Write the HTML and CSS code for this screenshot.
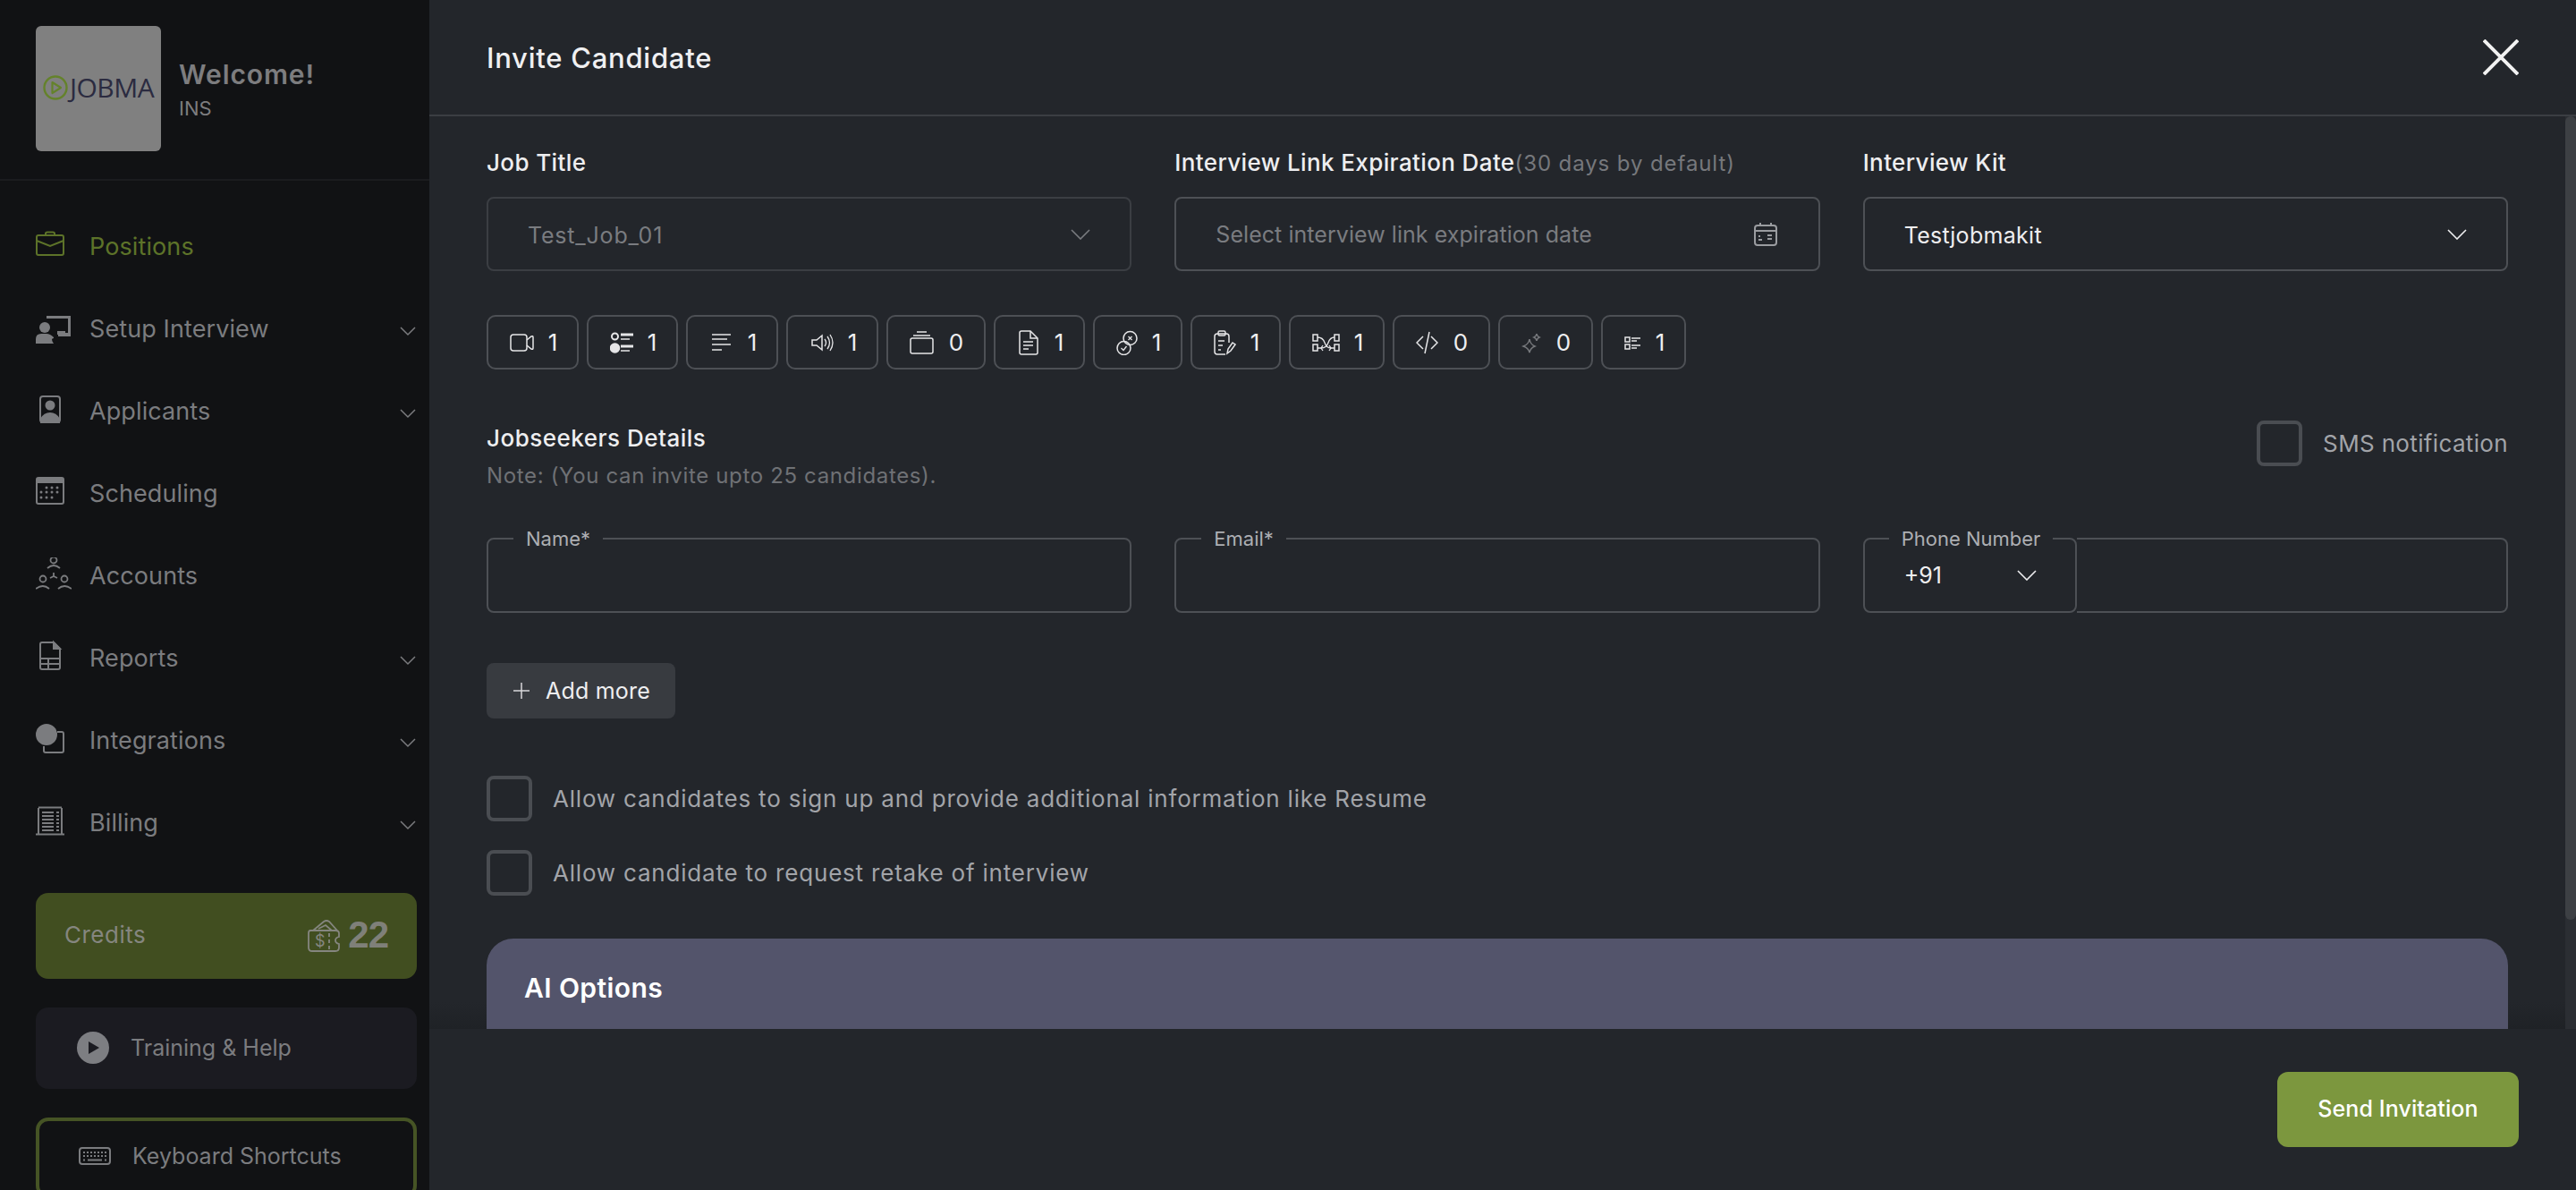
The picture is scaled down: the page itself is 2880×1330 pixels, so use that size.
FILE: index.html
```html
<!DOCTYPE html>
<html lang="en">
<head>
    <meta charset="UTF-8">
    <meta name="viewport" content="width=device-width, initial-scale=1.0">
    <title>Invite Candidate</title>
    <link rel="stylesheet" href="styles.css">
</head>
<body>
    <aside class="sidebar">
        <div class="brand">
            <div class="logo">
                <svg class="logo-mark" width="28" height="28" viewBox="0 0 28 28"><circle cx="14" cy="14" r="12.5" fill="none" stroke="#64822b" stroke-width="2.4"/><path d="M10.5 8 L20 14 L10.5 20 Z" fill="none" stroke="#64822b" stroke-width="2.2" stroke-linejoin="round"/></svg>
                <span class="logo-text">JOBMA</span>
            </div>
            <div class="brand-text">
                <div class="welcome">Welcome!</div>
                <div class="org">INS</div>
            </div>
        </div>

        <nav class="nav">
            <a class="nav-item active">
                <svg class="nav-icon" width="40" height="40" viewBox="0 0 40 40" fill="none" stroke="currentColor" stroke-width="2"><rect x="1" y="8" width="30" height="22" rx="2"/><path d="M1 14 L16 20 L31 14"/><path d="M11 8 V6 Q11 4.500 13 4.500 H19 Q21 4.500 21 6 V8"/></svg>
                <span>Positions</span>
            </a>
            <a class="nav-item">
                <svg class="nav-icon" width="40" height="40" viewBox="0 0 40 40" fill="currentColor"><path d="M12 9 V6 H39 V29 H25 V25 H36 V9 Z"/><rect x="24" y="23" width="9" height="4"/><circle cx="10" cy="19" r="6"/><path d="M0 37 V32 Q0 26 6 26 H12 Q16 26 20 30 V31 H20 Q16 31 20 37 Z"/></svg>
                <span>Setup Interview</span>
                <svg class="chevron" width="18" height="12" viewBox="0 0 18 12"><path d="M1 2 L9 10 L17 2" fill="none" stroke="currentColor" stroke-width="1.500"/></svg>
            </a>
            <a class="nav-item">
                <svg class="nav-icon" width="40" height="40" viewBox="0 0 40 40"><rect x="5" y="4" width="22" height="29" rx="3" fill="none" stroke="currentColor" stroke-width="2"/><circle cx="16" cy="14" r="5.500" fill="currentColor"/><path d="M5 34 V29 Q9 22 16 22 Q23 22 27 29 V34 Z" fill="currentColor"/></svg>
                <span>Applicants</span>
                <svg class="chevron" width="18" height="12" viewBox="0 0 18 12"><path d="M1 2 L9 10 L17 2" fill="none" stroke="currentColor" stroke-width="1.500"/></svg>
            </a>
            <a class="nav-item">
                <svg class="nav-icon" width="40" height="40" viewBox="0 0 40 40" fill="currentColor"><path d="M3 2 H29 Q32 2 32 5 V30 Q32 33 29 33 H3 Q0 33 0 30 V5 Q0 2 3 2 Z M2 9 V30 Q2 31 3 31 H29 Q30 31 30 30 V9 Z"/><circle cx="12" cy="14" r="1.500"/><circle cx="18" cy="14" r="1.500"/><circle cx="24" cy="14" r="1.500"/><circle cx="6" cy="19" r="1.500"/><circle cx="12" cy="19" r="1.500"/><circle cx="18" cy="19" r="1.500"/><circle cx="24" cy="19" r="1.500"/><circle cx="6" cy="25" r="1.500"/><circle cx="12" cy="25" r="1.500"/><circle cx="18" cy="25" r="1.500"/></svg>
                <span>Scheduling</span>
            </a>
            <a class="nav-item">
                <svg class="nav-icon" width="40" height="40" viewBox="0 0 40 40" fill="none" stroke="currentColor" stroke-width="1.800"><circle cx="20" cy="3" r="3.500"/><path d="M13 12 Q20 6 27 12"/><circle cx="8" cy="24" r="3.500"/><path d="M0 35 Q8 29 15 35"/><circle cx="32" cy="24" r="3.500"/><path d="M25 35 Q32 29 40 35"/><path d="M20 17 V21 M20 21 L16 23 M20 21 L24 23"/></svg>
                <span>Accounts</span>
            </a>
            <a class="nav-item">
                <svg class="nav-icon" width="40" height="40" viewBox="0 0 40 40" fill="none" stroke="currentColor" stroke-width="2"><path d="M7 3 H20 L27 10 V31 Q27 33 25 33 H7 Q5 33 5 31 V5 Q5 3 7 3 Z"/><path d="M20 3 L27 10 H20 Z" fill="currentColor"/><path d="M5 21 H27 M5 27 H27 M14 21 V33"/></svg>
                <span>Reports</span>
                <svg class="chevron" width="18" height="12" viewBox="0 0 18 12"><path d="M1 2 L9 10 L17 2" fill="none" stroke="currentColor" stroke-width="1.500"/></svg>
            </a>
            <a class="nav-item">
                <svg class="nav-icon" width="40" height="40" viewBox="0 0 40 40"><path d="M24 11 H29 Q31 11 31 13 V32 Q31 34 29 34 H11 Q9 34 9 32 V27" fill="none" stroke="currentColor" stroke-width="2"/><circle cx="12" cy="14" r="12" fill="currentColor"/></svg>
                <span>Integrations</span>
                <svg class="chevron" width="18" height="12" viewBox="0 0 18 12"><path d="M1 2 L9 10 L17 2" fill="none" stroke="currentColor" stroke-width="1.500"/></svg>
            </a>
            <a class="nav-item">
                <svg class="nav-icon" width="40" height="40" viewBox="0 0 40 40" fill="none" stroke="currentColor" stroke-width="2"><path d="M3 4 V33 M29 4 V33 M0 33.500 H32 M3 3.500 H29" /><path d="M7 9 H20 M7 13 H20 M7 17 H20 M7 21 H20 M7 25 H20 M7 29 H20" stroke-width="1.800"/><path d="M23 9 H26 M23 13 H26 M23 17 H26 M23 21 H26 M23 25 H26 M23 29 H26" stroke-width="1.800"/></svg>
                <span>Billing</span>
                <svg class="chevron" width="18" height="12" viewBox="0 0 18 12"><path d="M1 2 L9 10 L17 2" fill="none" stroke="currentColor" stroke-width="1.500"/></svg>
            </a>
        </nav>

        <div class="credits">
            <span class="credits-label">Credits</span>
            <svg class="credits-icon" width="36" height="36" viewBox="0 0 36 36" fill="none" stroke="currentColor" stroke-width="1.800"><path d="M3 12 H31 Q35 12 35 15 V19 Q31 20 31 23 Q31 26 35 27 V31 Q35 35 31 35 H5 Q1 35 1 31 V15 Q1 12 3 12 Z"/><path d="M6 12 L18 2 Q21 0 24 2 L33 12"/><path d="M12 10 L20 6 L27 12"/><path d="M24 15 V33" stroke-dasharray="4 3"/><text x="8" y="30" class="credits-dollar">$</text></svg>
            <span class="credits-count">22</span>
        </div>

        <div class="training">
            <svg width="36" height="36" viewBox="0 0 36 36"><circle cx="18" cy="18" r="18" fill="#7d7e82"/><path d="M13 11 L25 18 L13 25 Z" fill="#1b1b21"/></svg>
            <span>Training &amp; Help</span>
        </div>

        <div class="shortcuts">
            <svg width="36" height="20" viewBox="0 0 36 20" fill="none" stroke="currentColor"><rect x="1" y="1" width="34" height="18" rx="3" stroke-width="2"/><path d="M5 6 H31 M5 10 H31" stroke-width="2" stroke-dasharray="2 2"/><path d="M10 14.500 H26" stroke-width="2"/><path d="M5 14.500 H7 M29 14.500 H31" stroke-width="2"/></svg>
            <span>Keyboard Shortcuts</span>
        </div>
    </aside>

    <main class="main">
        <header class="modal-header">
            <h1>Invite Candidate</h1>
            <svg class="close" width="40" height="40" viewBox="0 0 40 40"><path d="M1 1 L39 39 M39 1 L1 39" stroke="#f2f2f2" stroke-width="4"/></svg>
        </header>

        <div class="modal-body">
            <div class="form">
                <div class="grid">
                    <div>
                        <label class="field-label">Job Title</label>
                        <div class="select disabled">
                            <span>Test_Job_01</span>
                            <svg width="22" height="12" viewBox="0 0 22 12"><path d="M1 1 L11 11 L21 1" fill="none" stroke="currentColor" stroke-width="1.600"/></svg>
                        </div>
                    </div>
                    <div>
                        <label class="field-label">Interview Link Expiration Date<span class="hint">(30 days by default)</span></label>
                        <div class="select placeholder">
                            <span>Select interview link expiration date</span>
                            <svg class="calendar" width="26" height="26" viewBox="0 0 26 26" fill="none" stroke="currentColor" stroke-width="2"><rect x="1" y="3" width="24" height="22" rx="3"/><path d="M1 9 H25 M7 0 V4 M19 0 V4"/><path d="M5 19 H9 M5 15 H7 M15 14 H20 M15 18 H20" stroke-width="1.800"/></svg>
                        </div>
                    </div>
                    <div>
                        <label class="field-label">Interview Kit</label>
                        <div class="select">
                            <span>Testjobmakit</span>
                            <svg width="22" height="12" viewBox="0 0 22 12"><path d="M1 1 L11 11 L21 1" fill="none" stroke="currentColor" stroke-width="1.600"/></svg>
                        </div>
                    </div>
                </div>

                <div class="chips">
                    <div class="chip">
                        <svg width="27" height="28" viewBox="0 0 27 28"><rect x="1" y="5" width="18" height="18" rx="3"/><path d="M19 11 L24 7 Q26 6 26 8 V20 Q26 22 24 21 L19 17"/></svg>
                        <span class="count">1</span>
                    </div>
                    <div class="chip">
                        <svg width="26" height="28" viewBox="0 0 26 28"><circle cx="5.500" cy="7" r="3.500" stroke-width="2"/><circle cx="5.500" cy="20" r="5" fill="#e6e6e8"/><path d="M12 5 H26 M12 18 H26" stroke-width="3"/><path d="M12 10 H22 M12 23 H22"/></svg>
                        <span class="count">1</span>
                    </div>
                    <div class="chip">
                        <svg width="27" height="28" viewBox="0 0 27 28"><path d="M3 5 H24 M3 10 H20 M3 16 H24 M3 22 H14"/></svg>
                        <span class="count">1</span>
                    </div>
                    <div class="chip">
                        <svg width="27" height="28" viewBox="0 0 27 28"><path d="M3 11 H8 L14 6 V22 L8 17 H3 Z"/><path d="M17 10 Q20 14 17 18 M20 7 Q25 14 20 21 M23 5 Q29 14 23 23" stroke-width="1.300"/></svg>
                        <span class="count">1</span>
                    </div>
                    <div class="chip">
                        <svg width="27" height="28" viewBox="0 0 27 28"><rect x="1" y="9" width="25" height="17" rx="2"/><path d="M4 6 H23 M8 2 H19"/></svg>
                        <span class="count wide">0</span>
                    </div>
                    <div class="chip">
                        <svg width="26" height="28" viewBox="0 0 26 28"><path d="M5 1 H15 L23 9 V25 Q23 27 21 27 H5 Q3 27 3 25 V3 Q3 1 5 1 Z"/><path d="M15 1 V9 H23"/><path d="M7 13 H18 M7 17 H18 M7 21 H13"/></svg>
                        <span class="count">1</span>
                    </div>
                    <div class="chip">
                        <svg width="24" height="28" viewBox="0 0 24 28"><circle cx="15.500" cy="9" r="7.500"/><circle cx="8.500" cy="20" r="7.500"/><path d="M13.500 7 L17.500 11 M17.500 7 L13.500 11 M5.500 20 L8 22.500 L11.500 18" stroke-width="1.300"/></svg>
                        <span class="count">1</span>
                    </div>
                    <div class="chip">
                        <svg width="25" height="28" viewBox="0 0 25 28"><path d="M13 27 H4 Q1 27 1 24 V7 Q1 4 4 4 H14 Q17 4 17 7 V14"/><rect x="5" y="1" width="8" height="5" rx="1.500"/><path d="M5 12 H12 M5 17 H10 M5 22 H8"/><path d="M15 26 L16 21 L21 14 L24 16 L19 23 Z"/></svg>
                        <span class="count">1</span>
                    </div>
                    <div class="chip">
                        <svg width="31" height="28" viewBox="0 0 31 28"><rect x="1" y="5" width="5" height="7"/><rect x="1" y="16" width="5" height="7"/><rect x="25" y="5" width="5" height="7"/><rect x="25" y="16" width="5" height="7"/><path d="M6 8 Q12 8 14 14 Q16 20 21 20 H25 M25 8 Q20 8 18 14 Q16 20 10 20 H6" stroke-width="1.300"/><path d="M12 17 L10 20 L12 23 M19 17 L21 20 L19 23" stroke-width="1.300"/></svg>
                        <span class="count">1</span>
                    </div>
                    <div class="chip">
                        <svg width="25" height="28" viewBox="0 0 25 28"><path d="M8 7 L1 14 L8 21 M17 7 L24 14 L17 21 M15 2 L10 26"/></svg>
                        <span class="count wide">0</span>
                    </div>
                    <div class="chip">
                        <svg class="dim" width="22" height="28" viewBox="1 0 22 28"><path d="M10 10 Q11 16 16 18 Q11 20 10 25 Q9 20 3 18 Q9 16 10 10 Z M18 4 Q18.500 7 21 8 Q18.500 9 18 12 Q17.500 9 15 8 Q17.500 7 18 4 Z"/></svg>
                        <span class="count wide">0</span>
                    </div>
                    <div class="chip">
                        <svg width="19" height="28" viewBox="0 0 19 28"><rect x="1" y="8" width="5" height="5"/><rect x="1" y="16" width="5" height="5"/><path d="M8 9 H18 M8 12 H14 M8 17 H18 M8 20 H14" stroke-width="1.300"/></svg>
                        <span class="count">1</span>
                    </div>
                </div>

                <div class="details-head">
                    <div class="details-text">
                        <h2>Jobseekers Details</h2>
                        <p>Note: (You can invite upto 25 candidates).</p>
                    </div>
                    <label class="check sms">
                        <span class="box"></span>
                        <span>SMS notification</span>
                    </label>
                </div>

                <div class="grid candidate-row">
                    <div class="outlined">
                        <span class="legend">Name*</span>
                    </div>
                    <div class="outlined">
                        <span class="legend">Email*</span>
                    </div>
                    <div class="phone">
                        <div class="outlined phone-code">
                            <span class="legend">Phone Number</span>
                            <span>+91</span>
                            <svg width="22" height="12" viewBox="0 0 22 12"><path d="M1 1 L11 11 L21 1" fill="none" stroke="currentColor" stroke-width="1.600"/></svg>
                        </div>
                        <div class="outlined phone-input"></div>
                    </div>
                </div>

                <button class="add-more">
                    <svg width="18" height="18" viewBox="0 0 18 18"><path d="M9 0 V18 M0 9 H18" stroke="#d8d8da" stroke-width="1.500"/></svg>
                    Add more
                </button>

                <div class="options">
                    <label class="check">
                        <span class="box"></span>
                        <span>Allow candidates to sign up and provide additional information like Resume</span>
                    </label>
                    <label class="check">
                        <span class="box"></span>
                        <span>Allow candidate to request retake of interview</span>
                    </label>
                </div>

                <section class="ai-card">
                    <h3>AI Options</h3>
                </section>
            </div>
            <div class="scrollbar"><div class="thumb"></div></div>
        </div>

        <footer class="modal-footer">
            <button class="send">Send Invitation</button>
        </footer>
    </main>
</body>
</html>
```

FILE: styles.css
```css
* {
    box-sizing: border-box;
}
html, body {
    height: 100%;
}
body {
    margin: 0;
    display: flex;
    overflow: hidden;
    font-family: Inter, "Noto Sans", sans-serif;
    background: #23262b;
    color: #eeeef0;
}

/* sidebar */
.sidebar {
    width: 480px;
    flex-shrink: 0;
    height: 100vh;
    overflow: hidden;
    background: #111214;
    color: #7b7c7f;
}
.brand {
    display: flex;
    align-items: center;
    gap: 20px;
    height: 202px;
    padding: 0 40px 2px;
    border-bottom: 2px solid #1b1c1f;
}
.logo {
    width: 140px;
    height: 140px;
    background: #808080;
    border-radius: 6px;
    display: flex;
    align-items: center;
    justify-content: center;
    gap: 2px;
    padding-bottom: 3px;
}
.logo-text {
    font-family: "Open Sans", sans-serif;
    font-size: 30px;
    color: #2b2b40;
    letter-spacing: -0.5px;
}
.brand-text {
    padding-top: 3px;
}
.welcome {
    font-size: 30px;
    font-weight: 600;
    color: #7d7d7f;
    line-height: 40px;
    letter-spacing: 0.9px;
}
.org {
    font-size: 22px;
    color: #7d7d7f;
    line-height: 36px;
}
.nav {
    padding-top: 27px;
}
.nav-item {
    height: 92px;
    padding: 0 15px 0 40px;
    display: flex;
    align-items: center;
    font-size: 27px;
    letter-spacing: 0.1px;
}
.nav-item.active {
    color: #5d7329;
}
.nav-icon {
    margin-right: 20px;
    flex-shrink: 0;
}
.chevron {
    margin-left: auto;
    margin-top: 6px;
}
.credits {
    margin: 33px 14px 0 40px;
    height: 96px;
    padding: 0 32px;
    background: #414e20;
    border-radius: 14px;
    display: flex;
    align-items: center;
    font-size: 26px;
    color: #85867f;
}
.credits-label {
    letter-spacing: 0.5px;
    padding-bottom: 3px;
}
.credits-icon {
    margin-left: auto;
    margin-right: 9px;
}
.credits-dollar {
    font-size: 18px;
    fill: currentColor;
    stroke: none;
}
.credits-count {
    font-family: "Liberation Sans", sans-serif;
    font-weight: 700;
    font-size: 42px;
    letter-spacing: -1px;
    color: #7f8079;
    padding-bottom: 2px;
}
.training {
    margin: 32px 14px 0 40px;
    height: 91px;
    padding: 0 46px 2px;
    background: #1b1b21;
    border-radius: 14px;
    display: flex;
    align-items: center;
    gap: 24px;
    font-size: 25px;
}
.shortcuts {
    margin: 32px 14px 0 40px;
    height: 90px;
    padding: 0 44px 4px;
    border: 4px solid #465425;
    border-radius: 14px;
    display: flex;
    align-items: center;
    gap: 24px;
    font-size: 25px;
}

/* modal */
.main {
    flex: 1;
    min-width: 0;
    height: 100vh;
    display: flex;
    flex-direction: column;
}
.modal-header {
    height: 130px;
    flex-shrink: 0;
    padding: 0 64px;
    display: flex;
    align-items: center;
    justify-content: space-between;
    border-bottom: 2px solid #3b3e43;
}
.modal-header h1 {
    margin: 0;
    font-size: 31px;
    font-weight: 500;
    letter-spacing: 0.75px;
    color: #f0f0f2;
}
.modal-body {
    flex: 1;
    min-height: 0;
    display: flex;
}
.form {
    flex: 1;
    min-width: 0;
    overflow: hidden;
    padding: 34px 64px 0;
    background: linear-gradient(to top, #1f2226, rgba(31, 34, 38, 0) 30px);
}
.scrollbar {
    width: 12px;
    flex-shrink: 0;
    background: #2b2e33;
}
.thumb {
    height: 898px;
    background: #3d4044;
    border-radius: 6px;
}
.grid {
    display: grid;
    grid-template-columns: repeat(3, 1fr);
    gap: 48px;
}
.field-label {
    display: block;
    height: 34px;
    line-height: 36px;
    margin-bottom: 22px;
    font-size: 26px;
    font-weight: 500;
    letter-spacing: 0.38px;
    white-space: nowrap;
    color: #eeeef0;
}
.hint {
    font-size: 24px;
    font-weight: 400;
    letter-spacing: 0.9px;
    color: #76787c;
}
.select {
    height: 83px;
    padding: 0 44px;
    border: 2px solid #4d5055;
    border-radius: 8px;
    display: flex;
    align-items: center;
    justify-content: space-between;
    font-size: 25px;
    letter-spacing: 0.3px;
    color: #eeeef0;
}
.select span {
    padding-top: 2px;
}
.select.disabled {
    border-color: #3b3e43;
    color: #7a7c80;
    padding-right: 44px;
}
.select.disabled span {
    letter-spacing: 0.8px;
}
.select.placeholder {
    color: #7a7c80;
    padding-right: 46px;
    letter-spacing: 0.05px;
}
.select.placeholder span {
    padding-top: 0;
}
.select .calendar {
    color: #9a9ca0;
}
.chips {
    margin-top: 49px;
    display: flex;
    gap: 9px;
}
.chip {
    height: 61px;
    padding: 0 24px;
    border: 2px solid #4d5055;
    border-radius: 10px;
    display: flex;
    align-items: center;
    gap: 18px;
}
.chip svg {
    fill: none;
    stroke: #e6e6e8;
    stroke-width: 1.500;
    flex-shrink: 0;
}
.chip svg.dim {
    stroke: #77797d;
}
.count {
    width: 6px;
    font-size: 26px;
    display: flex;
    justify-content: center;
    color: #eeeef0;
}
.count.wide {
    width: 14px;
}
.details-head {
    margin-top: 57px;
    display: flex;
    justify-content: space-between;
    align-items: flex-start;
}
.details-text {
    padding-top: 3px;
}
.details-text h2 {
    margin: 0;
    height: 34px;
    line-height: 34px;
    font-size: 26px;
    font-weight: 500;
    letter-spacing: 0.5px;
}
.details-text p {
    margin: 8px 0 0;
    height: 34px;
    line-height: 34px;
    font-size: 24px;
    letter-spacing: 0.65px;
    color: #6f7175;
}
.check {
    display: flex;
    align-items: center;
    gap: 23px;
    font-size: 26px;
    letter-spacing: 0.8px;
    color: #a2a4a9;
}
.check.sms {
    letter-spacing: 0.35px;
}
.box {
    width: 51px;
    height: 51px;
    flex-shrink: 0;
    border: 4px solid #4a4d52;
    border-radius: 8px;
}
.candidate-row {
    margin-top: 52px;
}
.outlined {
    position: relative;
    height: 84px;
    border: 2px solid #4d5055;
    border-radius: 8px;
}
.legend {
    position: absolute;
    top: -14px;
    left: 28px;
    padding: 0 14px;
    line-height: 26px;
    font-size: 22px;
    color: #adafb3;
    background: #23262b;
    white-space: nowrap;
}
.phone {
    display: flex;
}
.phone-code {
    width: 239px;
    flex-shrink: 0;
    padding: 0 43px 0 44px;
    display: flex;
    align-items: center;
    justify-content: space-between;
    font-size: 25px;
}
.phone-code .legend {
    left: 27px;
}
.phone-input {
    flex: 1;
    border-left: none;
    border-radius: 0 8px 8px 0;
}
.add-more {
    margin-top: 56px;
    height: 62px;
    width: 211px;
    padding: 0 0 0 30px;
    border: none;
    border-radius: 8px;
    background: #383b40;
    display: flex;
    align-items: center;
    gap: 18px;
    font-family: inherit;
    font-size: 25px;
    letter-spacing: 0.2px;
    color: #eeeef0;
}
.options {
    margin-top: 64px;
    display: flex;
    flex-direction: column;
    gap: 32px;
}
.ai-card {
    margin-top: 48px;
    height: 200px;
    padding: 38px 42px;
    background: #53546b;
    border-radius: 30px 30px 0 0;
}
.ai-card h3 {
    margin: 0;
    line-height: 34px;
    font-size: 30px;
    font-weight: 600;
    letter-spacing: 0.4px;
    color: #ffffff;
}
.modal-footer {
    height: 180px;
    flex-shrink: 0;
    padding: 48px 64px 0;
    display: flex;
    justify-content: flex-end;
    align-items: flex-start;
}
.send {
    width: 270px;
    height: 84px;
    padding: 0 0 3px;
    border: none;
    border-radius: 12px;
    background: #7c973e;
    font-family: inherit;
    font-size: 25px;
    font-weight: 500;
    letter-spacing: 0.1px;
    color: #ffffff;
}
```
